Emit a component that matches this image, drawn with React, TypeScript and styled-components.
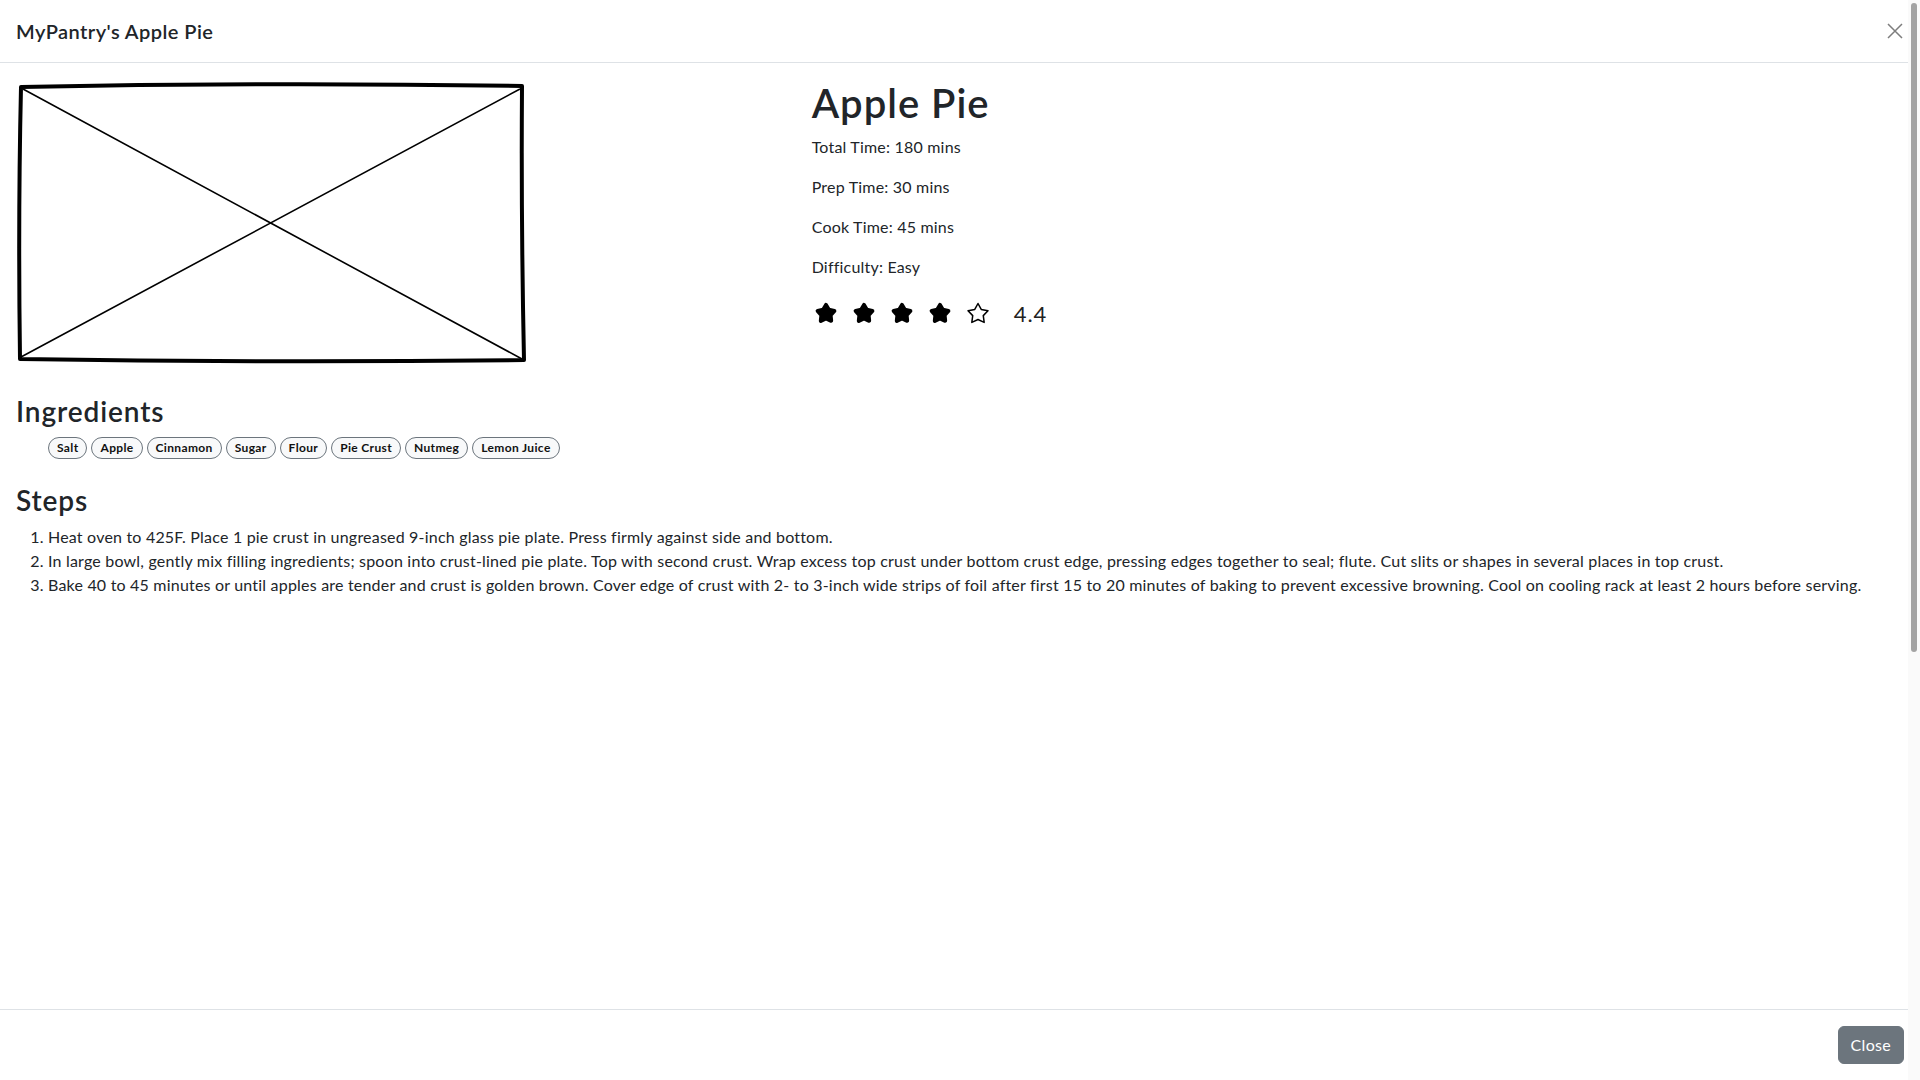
import React from "react";
import styled, { createGlobalStyle } from "styled-components";

const GlobalStyle = createGlobalStyle`
  html, body { margin: 0; padding: 0; background: #fff; overflow: hidden; }
  body {
    font-family: Lato, "Noto Sans", sans-serif;
    color: #212529;
    font-size: 16px;
    line-height: 1.5;
    letter-spacing: 0.2px;
  }
`;

const Screen = styled.div`
  display: flex;
  height: 100vh;
`;

const Modal = styled.div`
  flex: 1;
  min-width: 0;
  display: flex;
  flex-direction: column;
  background: #fff;
`;

const ScrollTrack = styled.div`
  width: 12px;
  padding: 3px;
  box-sizing: border-box;
  background: #fafafa;
`;

const ScrollThumb = styled.div`
  height: 649px;
  border-radius: 3px;
  background: #a3a3a3;
`;

const Header = styled.header`
  display: flex;
  align-items: center;
  justify-content: space-between;
  padding: 16px 5px 16px 16px;
  border-bottom: 1px solid #dee2e6;
`;

const Title = styled.h5`
  margin: 0;
  font-size: 20px;
  font-weight: 600;
  line-height: 1.5;
  letter-spacing: 0.45px;
`;

const CloseX = styled.button`
  display: flex;
  align-items: center;
  justify-content: center;
  width: 16px;
  height: 16px;
  padding: 0;
  border: 0;
  background: transparent;
  cursor: pointer;
`;

const Body = styled.main`
  flex: 1;
  overflow: hidden;
  padding: 16px;
`;

const Row = styled.div`
  display: grid;
  grid-template-columns: minmax(0, 5fr) minmax(0, 7fr);
  column-gap: 24px;
  margin-bottom: 26px;
`;

const Picture = styled.svg`
  display: block;
  width: 516px;
  height: 290px;
`;

const Info = styled.div`
  display: flex;
  flex-direction: column;
`;

const RecipeName = styled.h1`
  margin: 0 0 8px;
  font-size: 40px;
  font-weight: 600;
  line-height: 1.2;
  letter-spacing: 1px;
`;

const Fact = styled.p`
  margin: 0 0 16px;
`;

const Rating = styled.div`
  display: flex;
  align-items: center;
  gap: 14px;
  height: 30px;
  margin: 3px 0 0 2px;
`;

const RatingValue = styled.span`
  margin-left: 10px;
  font-size: 22px;
  font-weight: 400;
  letter-spacing: 1px;
  color: #222;
`;

const SectionTitle = styled.h3`
  margin: 0 0 8px;
  font-size: 28px;
  font-weight: 600;
  line-height: 1.2;
  letter-spacing: 0.9px;
`;

const PillList = styled.ul`
  display: flex;
  flex-wrap: wrap;
  gap: 4px;
  list-style: none;
  margin: 0 0 25px;
  padding-left: 32px;
`;

const Pill = styled.li`
  padding: 3px 8px;
  border: 1px solid #6c757d;
  border-radius: 999px;
  background: #f8f9fa;
  font-size: 12px;
  font-weight: 700;
  line-height: 14px;
  letter-spacing: 0.35px;
  color: #111;
`;

const Steps = styled.ol`
  margin: 0 0 16px;
  padding-left: 32px;
`;

const Step = styled.li`
  line-height: 24px;
`;

const Footer = styled.footer`
  display: flex;
  justify-content: flex-end;
  padding: 12px 0 12px 12px;
  border-top: 1px solid #dee2e6;
`;

const Button = styled.button`
  margin: 4px;
  padding: 6px 12px;
  border: 1px solid #6c757d;
  border-radius: 6px;
  background: #6c757d;
  color: #fff;
  font-family: inherit;
  font-size: 16px;
  line-height: 24px;
  letter-spacing: 0.3px;
  cursor: pointer;
`;

const FILLED =
  "12,3.9 14.85,8.78 20.37,9.98 16.6,14.2 17.17,19.82 12,17.54 6.83,19.82 7.4,14.2 3.63,9.98 9.15,8.78";
const EMPTY =
  "12,2.5 15.24,8.45 21.99,9.71 17.27,14.64 18.18,21.39 12,18.5 5.82,21.39 6.73,14.64 2.01,9.71 8.76,8.45";

const Star: React.FC<{ filled: boolean }> = ({ filled }) => (
  <svg width="24" height="24" viewBox="0 0 24 24">
    <polygon
      points={filled ? FILLED : EMPTY}
      fill={filled ? "#000" : "none"}
      stroke="#000"
      strokeWidth={filled ? 4 : 1.5}
      strokeLinejoin="round"
    />
  </svg>
);

const ingredients = [
  "Salt",
  "Apple",
  "Cinnamon",
  "Sugar",
  "Flour",
  "Pie Crust",
  "Nutmeg",
  "Lemon Juice",
];

const steps = [
  "Heat oven to 425F. Place 1 pie crust in ungreased 9-inch glass pie plate. Press firmly against side and bottom.",
  "In large bowl, gently mix filling ingredients; spoon into crust-lined pie plate. Top with second crust. Wrap excess top crust under bottom crust edge, pressing edges together to seal; flute. Cut slits or shapes in several places in top crust.",
  "Bake 40 to 45 minutes or until apples are tender and crust is golden brown. Cover edge of crust with 2- to 3-inch wide strips of foil after first 15 to 20 minutes of baking to prevent excessive browning. Cool on cooling rack at least 2 hours before serving.",
];

export default function App() {
  const rating = 4.4;
  return (
    <>
      <GlobalStyle />
      <Screen>
        <Modal>
          <Header>
            <Title>MyPantry's Apple Pie</Title>
            <CloseX aria-label="Close">
              <svg width="16" height="16" viewBox="0 0 16 16">
                <path d="M1 1 L15 15 M15 1 L1 15" stroke="#7d7d7d" strokeWidth="1.5" fill="none" />
              </svg>
            </CloseX>
          </Header>
          <Body>
            <Row>
              <Picture viewBox="0 0 516 290">
                <path
                  d="M5 8 Q255 3 506 7 Q505 140 508 281 Q256 284 4 280 Q2 140 5 8 Z"
                  fill="none"
                  stroke="#000"
                  strokeWidth="4"
                  strokeLinejoin="round"
                />
                <path d="M7 10 L506 280 M5 278 L504 10" stroke="#000" strokeWidth="1.6" fill="none" />
              </Picture>
              <Info>
                <RecipeName>Apple Pie</RecipeName>
                <Fact>Total Time: 180 mins</Fact>
                <Fact>Prep Time: 30 mins</Fact>
                <Fact>Cook Time: 45 mins</Fact>
                <Fact>Difficulty: Easy</Fact>
                <Rating>
                  {[1, 2, 3, 4, 5].map((i) => (
                    <Star key={i} filled={i <= Math.floor(rating)} />
                  ))}
                  <RatingValue>{rating}</RatingValue>
                </Rating>
              </Info>
            </Row>
            <SectionTitle>Ingredients</SectionTitle>
            <PillList>
              {ingredients.map((name) => (
                <Pill key={name}>{name}</Pill>
              ))}
            </PillList>
            <SectionTitle>Steps</SectionTitle>
            <Steps>
              {steps.map((s, i) => (
                <Step key={i}>{s}</Step>
              ))}
            </Steps>
          </Body>
          <Footer>
            <Button>Close</Button>
          </Footer>
        </Modal>
        <ScrollTrack>
          <ScrollThumb />
        </ScrollTrack>
      </Screen>
    </>
  );
}
